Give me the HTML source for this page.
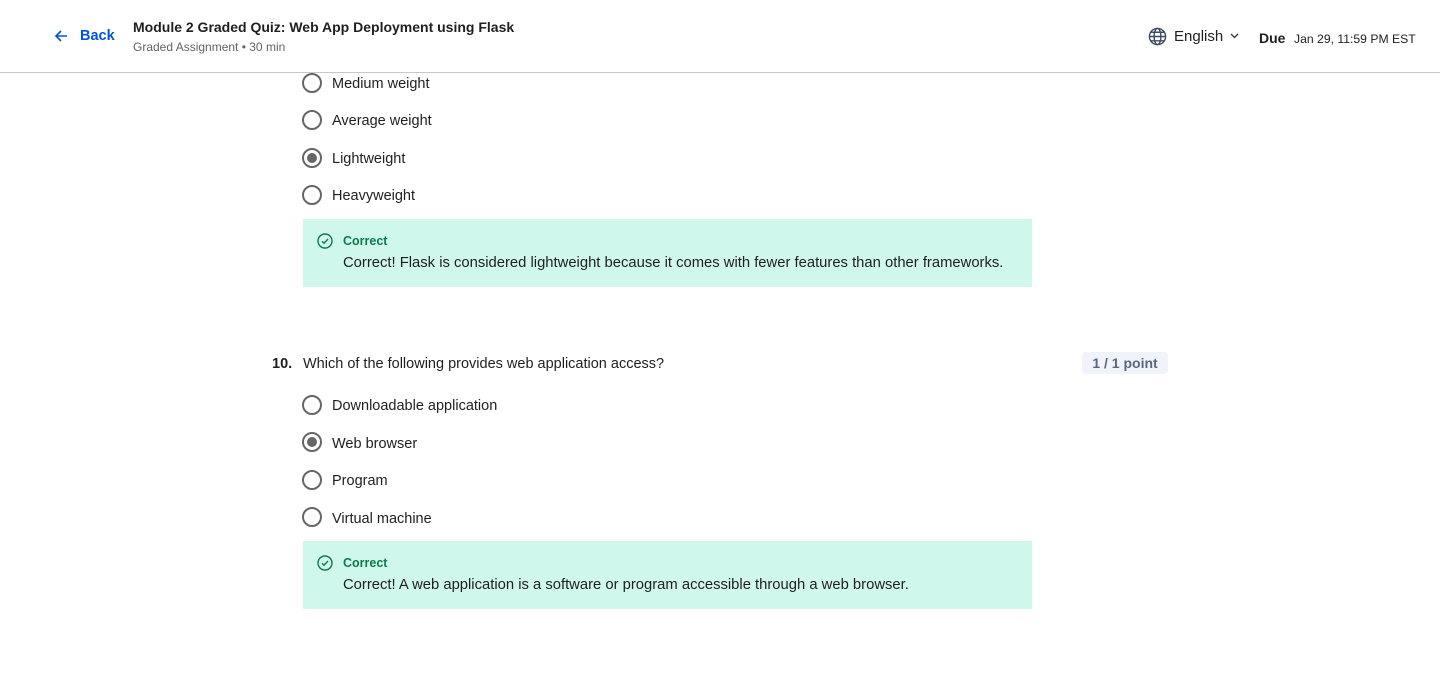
<!DOCTYPE html>
<html><head><meta charset="utf-8"><style>
*{margin:0;padding:0;box-sizing:border-box}
body{width:1440px;height:689px;background:#fff;font-family:"Liberation Sans",sans-serif;color:#1f1f1f;position:relative;overflow:hidden}
.hdr{position:absolute;left:0;top:0;width:1440px;height:73px;border-bottom:1px solid #c8c8c8;background:#fff}
.abs{position:absolute;white-space:nowrap}
.radio{position:absolute;left:302px;width:20px;height:20px;border:2px solid #666;border-radius:50%}
.radio.sel::after{content:"";position:absolute;left:3px;top:3px;width:10px;height:10px;border-radius:50%;background:#666}
.opt{position:absolute;left:332px;font-size:14.5px;color:#1f1f1f;white-space:nowrap}
.fb{position:absolute;left:303px;width:729px;height:68px;background:#d0f7ec}
.fb .t{position:absolute;left:40px;top:15px;font-size:12.5px;font-weight:bold;color:#0d7a4e}
.fb .d{position:absolute;left:40px;top:36px;font-size:14.8px;color:#1f1f1f;white-space:nowrap}
.fb svg{position:absolute;left:14px;top:14px}
</style></head><body>
<div class="hdr">
<svg class="abs" style="left:54px;top:29px" width="14" height="14" viewBox="0 0 14 14"><path d="M13 7H2M7 2L2 7l5 5" stroke="#0056d2" stroke-width="1.6" fill="none"/></svg>
<div class="abs" style="left:80px;top:28px;font-size:14.5px;font-weight:bold;color:#0056d2">Back</div>
<div class="abs" style="left:133px;top:19px;font-size:14px;font-weight:bold;color:#1f1f1f">Module 2 Graded Quiz: Web App Deployment using Flask</div>
<div class="abs" style="left:133px;top:40px;font-size:12px;color:#636363">Graded Assignment • 30 min</div>
<svg class="abs" style="left:1148px;top:27px" width="19" height="19" viewBox="0 0 20 20" fill="none" stroke="#3d4d66" stroke-width="1.5"><circle cx="10" cy="10" r="8.5"/><ellipse cx="10" cy="10" rx="3.6" ry="8.5"/><path d="M1.5 10h17M3 5.5h14M3 14.5h14"/></svg>
<div class="abs" style="left:1174px;top:28px;font-size:15px;color:#1f1f1f">English</div>
<svg class="abs" style="left:1230px;top:33px" width="9" height="6" viewBox="0 0 9 6"><path d="M1 1l3.5 3.5L8 1" stroke="#333" stroke-width="1.3" fill="none"/></svg>
<div class="abs" style="left:1259px;top:30px;font-size:14px;font-weight:bold">Due</div>
<div class="abs" style="left:1294px;top:32px;font-size:12.2px;color:#1f1f1f">Jan 29, 11:59 PM EST</div>
</div>

<div class="radio" style="top:73px"></div><div class="opt" style="top:76px">Medium weight</div>
<div class="radio" style="top:110px"></div><div class="opt" style="top:113px">Average weight</div>
<div class="radio sel" style="top:148px"></div><div class="opt" style="top:151px">Lightweight</div>
<div class="radio" style="top:185px"></div><div class="opt" style="top:188px">Heavyweight</div>
<div class="fb" style="top:219px">
<svg width="16" height="16" viewBox="0 0 16 16" fill="none" stroke="#0d7a4e" stroke-width="1.4"><circle cx="8" cy="8" r="7"/><path d="M5 8.2l2 2 4-4.2"/></svg>
<div class="t">Correct</div><div class="d">Correct! Flask is considered lightweight because it comes with fewer features than other frameworks.</div></div>

<div class="abs" style="left:272px;top:356px;font-size:14.5px;font-weight:bold">10.</div>
<div class="abs" style="left:303px;top:356px;font-size:14.5px">Which of the following provides web application access?</div>
<div class="abs" style="left:1082px;top:352px;width:86px;height:22px;background:#f0f3fa;border-radius:4px;font-size:14px;font-weight:bold;color:#5b6780;text-align:center;line-height:22px">1 / 1 point</div>

<div class="radio" style="top:395px"></div><div class="opt" style="top:398px">Downloadable application</div>
<div class="radio sel" style="top:432px"></div><div class="opt" style="top:436px">Web browser</div>
<div class="radio" style="top:470px"></div><div class="opt" style="top:473px">Program</div>
<div class="radio" style="top:507px"></div><div class="opt" style="top:511px">Virtual machine</div>
<div class="fb" style="top:541px">
<svg width="16" height="16" viewBox="0 0 16 16" fill="none" stroke="#0d7a4e" stroke-width="1.4"><circle cx="8" cy="8" r="7"/><path d="M5 8.2l2 2 4-4.2"/></svg>
<div class="t">Correct</div><div class="d">Correct! A web application is a software or program accessible through a web browser.</div></div>
</body></html>
